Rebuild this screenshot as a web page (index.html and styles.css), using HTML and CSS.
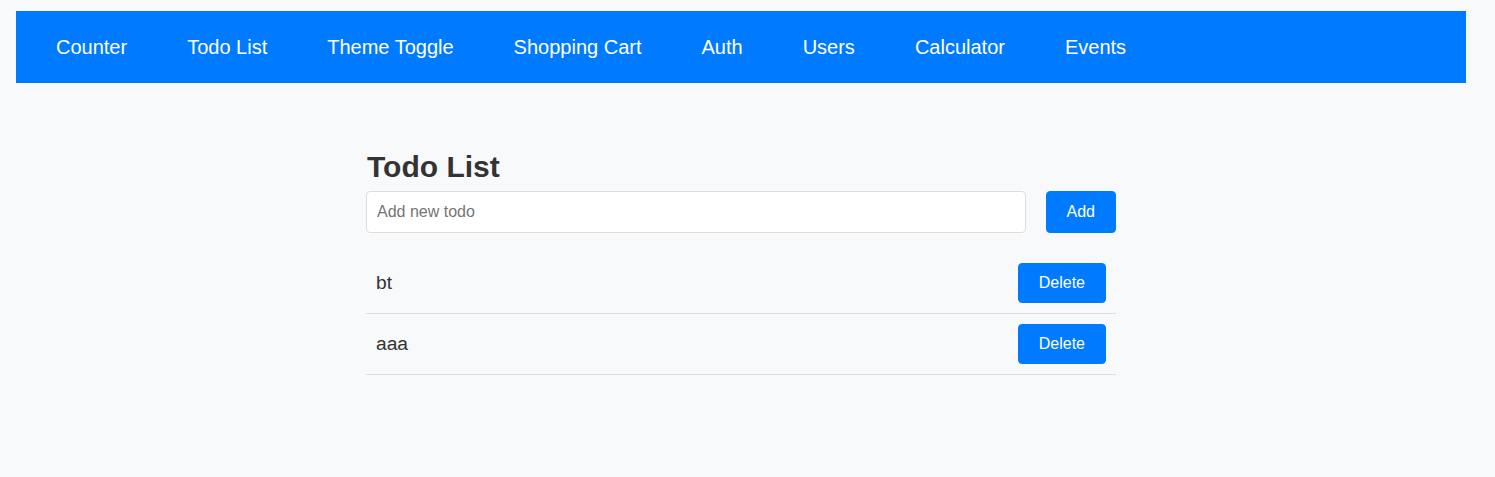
FILE: index.html
```html
<!DOCTYPE html>
<html lang="en">
<head>
<meta charset="utf-8">
<title>Todo List</title>
<link rel="stylesheet" href="styles.css">
</head>
<body>
<div class="app">
  <nav class="nav">
    <a class="nav-link" href="#">Counter</a>
    <a class="nav-link" href="#">Todo List</a>
    <a class="nav-link" href="#">Theme Toggle</a>
    <a class="nav-link" href="#">Shopping Cart</a>
    <a class="nav-link" href="#">Auth</a>
    <a class="nav-link" href="#">Users</a>
    <a class="nav-link" href="#">Calculator</a>
    <a class="nav-link" href="#">Events</a>
  </nav>
  <main class="main">
    <section class="todo">
      <h2 class="title">Todo List</h2>
      <form class="todo-form">
        <input class="todo-input" type="text" placeholder="Add new todo">
        <button class="btn btn-add" type="button">Add</button>
      </form>
      <ul class="todo-list">
        <li class="todo-item"><span class="todo-text">bt</span><button class="btn btn-delete" type="button">Delete</button></li>
        <li class="todo-item"><span class="todo-text">aaa</span><button class="btn btn-delete" type="button">Delete</button></li>
      </ul>
    </section>
  </main>
</div>
</body>
</html>
```
FILE: styles.css
```css
html, body {
  margin: 0;
  padding: 0;
  background: #f8f9fa;
  font-family: "Liberation Sans", Arial, sans-serif;
  color: #333;
}
.app {
  padding: 11px 29px 0 16px;
}
.nav {
  display: flex;
  align-items: center;
  height: 72px;
  padding: 0 10px;
  background: #007bff;
}
.nav-link {
  padding: 0 30px;
  color: #fff;
  text-decoration: none;
  font-size: 20px;
}
.main {
  padding-top: 67px;
}
.todo {
  width: 750px;
  margin: 0 auto;
}
.title {
  margin: 0 0 7px 1px;
  font-size: 30px;
  font-weight: bold;
  color: #333;
  line-height: normal;
}
.todo-form {
  display: flex;
  gap: 20px;
  margin: 0 0 20px;
}
.todo-input {
  flex: 1;
  height: 42px;
  box-sizing: border-box;
  padding: 10px;
  border: 1px solid #ddd;
  border-radius: 4px;
  background: #fff;
  font-family: "Liberation Sans", Arial, sans-serif;
  font-size: 16px;
  color: #333;
}
.todo-input::placeholder {
  color: #757575;
}
.btn {
  padding: 10px 20px;
  border: 1px solid #007bff;
  border-radius: 4px;
  background: #007bff;
  color: #fff;
  font-family: "Liberation Sans", Arial, sans-serif;
  font-size: 16px;
  line-height: 18px;
  cursor: pointer;
}
.btn-add {
  height: 42px;
}
.todo-list {
  list-style: none;
  margin: 0;
  padding: 0;
}
.todo-item {
  display: flex;
  align-items: center;
  justify-content: space-between;
  padding: 10px;
  border-bottom: 1px solid #ddd;
}
.todo-text {
  font-size: 19.2px;
}
```
